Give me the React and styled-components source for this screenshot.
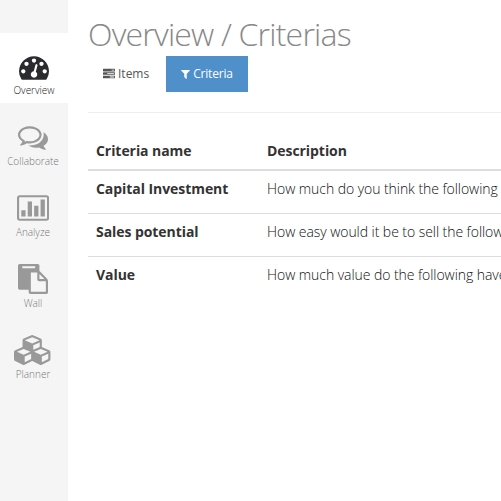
import React from "react";
import styled, { createGlobalStyle } from "styled-components";

const GlobalStyle = createGlobalStyle`
  * { box-sizing: border-box; }
  body {
    margin: 0;
    overflow: hidden;
    background: #fff;
    color: #333;
    font-family: "Open Sans", sans-serif;
    font-size: 14px;
    font-weight: 300;
    line-height: 20px;
  }
`;

const Page = styled.div`
  display: flex;
  width: 100vw;
  height: 100vh;
  overflow: hidden;
`;

const Sidebar = styled.nav`
  flex: 0 0 68px;
  display: flex;
  flex-direction: column;
  gap: 1px;
  padding-top: 33px;
  background: #f5f5f5;
`;

const NavItem = styled.a`
  display: flex;
  flex-direction: column;
  align-items: center;
  height: 70px;
  padding: ${(p) => (p.$active ? "19px 0 0" : "18px 2px 0 0")};
  font-size: 10px;
  line-height: 14px;
  white-space: nowrap;
  color: ${(p) => (p.$active ? "#2b2b2f" : "#999")};
  background: ${(p) => (p.$active ? "#fff" : "transparent")};
`;

const NavIcon = styled.svg`
  display: block;
  flex: none;
  height: 30px;
  width: ${(p) => p.$width}px;
  margin-bottom: ${(p) => (p.$active ? 1 : 2)}px;
  fill: currentColor;
`;

const NavLabel = styled.span`
  color: ${(p) => (p.$active ? "#222" : "#777")};
`;

const Main = styled.main`
  flex: 1;
  min-width: 0;
  padding: 14px 0 0 20px;
`;

const Title = styled.h1`
  margin: 0;
  height: 42px;
  font-size: 32px;
  line-height: 40px;
  font-weight: 300;
  letter-spacing: -0.8px;
  color: #888;
  white-space: nowrap;
`;

const Tabs = styled.div`
  display: flex;
  gap: 2px;
  height: 57px;
  border-bottom: 1px solid #eee;
`;

const Tab = styled.a`
  display: flex;
  align-items: center;
  gap: 3px;
  height: 36px;
  padding: 0 15px;
  font-size: 12px;
  font-weight: ${(p) => (p.$active ? 500 : 400)};
  letter-spacing: ${(p) => (p.$active ? "-0.2px" : "0")};
  color: ${(p) => (p.$active ? "#fff" : "#555")};
  background: ${(p) => (p.$active ? "#4f8fca" : "transparent")};
`;

const TabIcon = styled.svg`
  width: ${(p) => p.$width}px;
  height: 12px;
  fill: currentColor;
`;

const Table = styled.table`
  width: 700px;
  margin-top: 20px;
  border-collapse: separate;
  border-spacing: 0;
  table-layout: fixed;
  letter-spacing: -0.06px;
`;

const Heading = styled.th`
  width: ${(p) => p.$width || "auto"};
  height: 38px;
  padding: 8px;
  border-bottom: 2px solid #ddd;
  text-align: left;
  font-weight: 700;
`;

const Cell = styled.td`
  height: 43px;
  padding: 8px;
  vertical-align: top;
  white-space: nowrap;
  color: ${(p) => (p.$strong ? "#333" : "#111")};
  font-weight: ${(p) => (p.$strong ? 700 : 300)};
  border-bottom: ${(p) => (p.$last ? "none" : "1px solid #ddd")};
`;

const NAV = [
  {
    label: "Overview",
    box: 1792,
    active: true,
    path: "M384 1152q0-53-37.5-90.5t-90.5-37.5-90.5 37.5-37.5 90.5 37.5 90.5 90.5 37.5 90.5-37.5 37.5-90.5zm192-448q0-53-37.5-90.5t-90.5-37.5-90.5 37.5-37.5 90.5 37.5 90.5 90.5 37.5 90.5-37.5 37.5-90.5zm428 481l101-382q6-26-7.5-48.5t-38.5-29.5-48 6.5-30 39.5l-101 382q-60 5-107 43.5t-63 98.5q-20 77 20 146t117 89 146-20 89-117q16-60-6-117t-72-91zm660-33q0-53-37.5-90.5t-90.5-37.5-90.5 37.5-37.5 90.5 37.5 90.5 90.5 37.5 90.5-37.5 37.5-90.5zm-640-640q0-53-37.5-90.5t-90.5-37.5-90.5 37.5-37.5 90.5 37.5 90.5 90.5 37.5 90.5-37.5 37.5-90.5zm448 192q0-53-37.5-90.5t-90.5-37.5-90.5 37.5-37.5 90.5 37.5 90.5 90.5 37.5 90.5-37.5 37.5-90.5zm320 448q0 261-141 483-19 29-54 29h-1402q-35 0-54-29-141-221-141-483 0-182 71-348t191-286 286-191 348-71 348 71 286 191 191 286 71 348z",
  },
  {
    label: "Collaborate",
    box: 1792,
    path: "M704 384q-153 0-286 52t-211.5 141-78.5 191q0 82 53 158t149 132l97 56-35 84q34-20 62-39l44-31 53 10q78 14 153 14 153 0 286-52t211.5-141 78.5-191-78.5-191-211.5-141-286-52zm0-128q191 0 353.5 68.5t256.5 186.5 94 257-94 257-256.5 186.5-353.5 68.5q-86 0-176-16-124 88-278 128-36 9-86 16h-3q-11 0-20.5-8t-11.5-21q-1-3-1-6.5t.5-6.5 2-6l2.5-5 3.5-5.5 4-5 4.5-5 4-4.5q5-6 23-25t26-29.5 22.5-29 25-38.5 20.5-44q-124-72-195-177t-71-224q0-139 94-257t256.5-186.5 353.5-68.5zm822 1169q10 24 20.5 44t25 38.5 22.5 29 26 29.5 23 25q1 1 4 4.5t4.5 5 4 5 3.5 5.5l2.5 5 2 6 .5 6.5-1 6.5q-3 14-13 22t-22 7q-50-7-86-16-154-40-278-128-90 16-176 16-271 0-472-132 58 4 88 4 161 0 309-45t264-129q125-92 192-212t67-254q0-77-23-152 129 71 204 178t75 230q0 120-71 224.5t-195 176.5z",
  },
  {
    label: "Analyze",
    box: 1920,
    path: "M512 1024v384h-256v-384zM896 512v896h-256v-896zM1280 768v640h-256v-640zM1664 384v1024h-256v-1024zM160 128h1600q66 0 113 47t47 113v1216q0 66-47 113t-113 47h-1600q-66 0-113-47t-47-113v-1216q0-66 47-113t113-47zM160 256q-32 0-32 32v1216q0 32 32 32h1600q32 0 32-32v-1216q0-32-32-32z",
  },
  {
    label: "Wall",
    box: 1792,
    path: "M768 1664h896v-640h-416q-40 0-68-28t-28-68v-416h-384v1152zm256-1440v-64q0-13-9.5-22.5t-22.5-9.5h-704q-13 0-22.5 9.5t-9.5 22.5v64q0 13 9.5 22.5t22.5 9.5h704q13 0 22.5-9.5t9.5-22.5zm256 672h299l-299-299v299zm512 128v672q0 40-28 68t-68 28h-960q-40 0-68-28t-28-68v-160h-544q-40 0-68-28t-28-68v-1344q0-40 28-68t68-28h1088q40 0 68 28t28 68v328q21 13 36 28l408 408q28 28 48 76t20 88z",
  },
  {
    label: "Planner",
    box: 2304,
    path: "M640 1632l384-192v-314l-384 164v342zm-64-454l404-173-404-173-404 173zm1088 454l384-192v-314l-384 164v342zm-64-454l404-173-404-173-404 173zm-448-293l384-165v-266l-384 164v267zm-64-379l441-189-441-189-441 189zm1088 518v416q0 36-19 67t-52 47l-448 224q-25 14-57 14t-57-14l-448-224q-4-2-7-4-2 2-7 4l-448 224q-25 14-57 14t-57-14l-448-224q-33-16-52-47t-19-67v-416q0-38 21.5-70t56.5-48l434-186v-400q0-38 21.5-70t56.5-48l448-192q23-10 50-10t50 10l448 192q35 16 56.5 48t21.5 70v400l434 186q36 16 57 48t21 70z",
  },
];

const TASKS =
  "M1024 1408h640v-128h-640v128zm-384-512h1024v-128h-1024v128zm640-512h384v-128h-384v128zm512 832v256q0 26-19 45t-45 19h-1664q-26 0-45-19t-19-45v-256q0-26 19-45t45-19h1664q26 0 45 19t19 45zm0-512v256q0 26-19 45t-45 19h-1664q-26 0-45-19t-19-45v-256q0-26 19-45t45-19h1664q26 0 45 19t19 45zm0-512v256q0 26-19 45t-45 19h-1664q-26 0-45-19t-19-45v-256q0-26 19-45t45-19h1664q26 0 45 19t19 45z";
const FILTER =
  "M1595 295q17 41-14 70l-493 493v742q0 42-39 59-13 5-25 5-27 0-45-19l-256-256q-19-19-19-45v-486l-493-493q-31-29-14-70 17-39 59-39h1280q42 0 59 39z";

const ROWS = [
  ["Capital Investment", "How much do you think the following would cost?"],
  ["Sales potential", "How easy would it be to sell the following?"],
  ["Value", "How much value do the following have?"],
];

export default function App() {
  return (
    <Page>
      <GlobalStyle />
      <Sidebar>
        {NAV.map((item) => (
          <NavItem key={item.label} $active={item.active}>
            <NavIcon
              $active={item.active}
              $width={(item.box * 30) / 1792}
              viewBox={`0 0 ${item.box} 1792`}
            >
              <path fillRule="evenodd" d={item.path} />
            </NavIcon>
            <NavLabel $active={item.active}>{item.label}</NavLabel>
          </NavItem>
        ))}
      </Sidebar>
      <Main>
        <Title>Overview / Criterias</Title>
        <Tabs>
          <Tab>
            <TabIcon $width={12} viewBox="0 0 1792 1792">
              <path fillRule="evenodd" d={TASKS} />
            </TabIcon>
            Items
          </Tab>
          <Tab $active>
            <TabIcon $width={9} viewBox="192 0 1408 1792">
              <path d={FILTER} />
            </TabIcon>
            Criteria
          </Tab>
        </Tabs>
        <Table>
          <thead>
            <tr>
              <Heading $width="171px">Criteria name</Heading>
              <Heading>Description</Heading>
            </tr>
          </thead>
          <tbody>
            {ROWS.map(([name, description], i) => (
              <tr key={name}>
                <Cell $strong $last={i === ROWS.length - 1}>{name}</Cell>
                <Cell $last={i === ROWS.length - 1}>{description}</Cell>
              </tr>
            ))}
          </tbody>
        </Table>
      </Main>
    </Page>
  );
}
